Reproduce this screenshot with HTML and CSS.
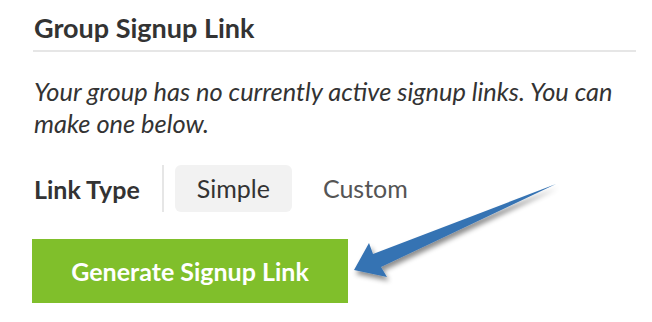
FILE: index.html
```html
<!DOCTYPE html>
<html>
<head>
<meta charset="utf-8">
<link rel="stylesheet" href="styles.css">
</head>
<body>
<div class="panel">
  <h2 class="title">Group Signup Link</h2>
  <p class="note">Your group has no currently active signup links. You can make one below.</p>
  <div class="type-row">
    <span class="type-label">Link Type</span>
    <span class="type-sep"></span>
    <span class="tab tab-active">Simple</span>
    <span class="tab">Custom</span>
  </div>
  <button class="generate">Generate Signup Link</button>
</div>
<svg class="arrow" width="652" height="322" viewBox="0 0 652 322">
  <defs>
    <filter id="shadow" x="-20%" y="-20%" width="140%" height="140%">
      <feDropShadow dx="2" dy="4" stdDeviation="2.5" flood-color="#000" flood-opacity="0.45"/>
    </filter>
  </defs>
  <polygon filter="url(#shadow)" fill="#3673b3"
    points="556,184 373,254 369,243 354,270 387,277 381,267"/>
</svg>
</body>
</html>
```

FILE: styles.css
```css
html, body {
  margin: 0;
  padding: 0;
  background: #ffffff;
}

body {
  width: 652px;
  height: 322px;
  overflow: hidden;
  position: relative;
  font-family: Lato, "Open Sans", sans-serif;
  color: #333333;
}

.panel {
  padding: 12px 16px 0 33px;
}

.title {
  margin: 0;
  font-size: 27px;
  line-height: 31px;
  font-weight: 700;
  color: #333333;
  padding-bottom: 7px;
  border-bottom: 2px solid #e6e6e6;
  padding-left: 1px;
}

.note {
  margin: 23px 0 0 1px;
  font-size: 25.4px;
  line-height: 32px;
  font-style: italic;
  color: #333333;
}

.type-row {
  display: flex;
  align-items: center;
  margin-top: 26px;
  height: 47px;
}

.type-label {
  font-size: 25px;
  font-weight: 700;
  margin-left: 1px;
  color: #333333;
}

.type-sep {
  width: 2px;
  height: 47px;
  background: #e6e6e6;
  margin-left: 22px;
  margin-right: 11px;
}

.tab {
  font-size: 25px;
  line-height: 47px;
  padding: 0 22px;
  border-radius: 6px;
  color: #555555;
}

.tab-active {
  background: #f2f2f2;
  color: #333333;
  margin-right: 9px;
}

.generate {
  display: block;
  margin-top: 27px;
  margin-left: -1px;
  width: 316px;
  height: 64px;
  border: none;
  background: #80bf2b;
  color: #ffffff;
  font-family: Lato, "Open Sans", sans-serif;
  font-size: 25px;
  font-weight: 700;
  padding: 0;
}

.arrow {
  position: absolute;
  left: 0;
  top: 0;
  pointer-events: none;
}
```
